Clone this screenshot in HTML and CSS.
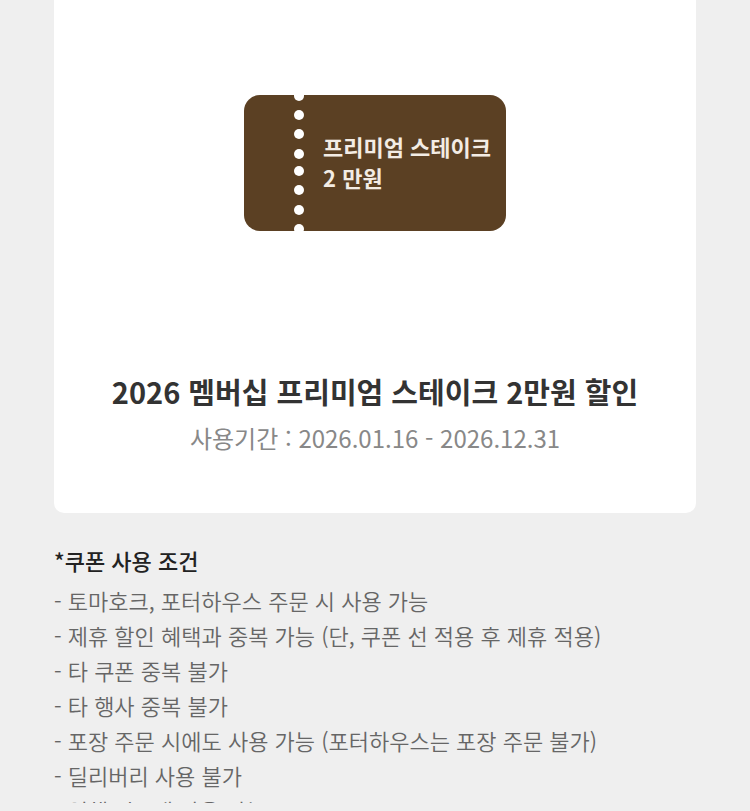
FILE: index.html
```
<!DOCTYPE html>
<html lang="ko">
<head>
  <meta charset="utf-8">
  <meta name="viewport" content="width=device-width, initial-scale=1">
  <title>2026 멤버십 프리미엄 스테이크 2만원 할인</title>
  <link rel="stylesheet" href="styles.css">
</head>
<body>
  <main class="container">
    <section class="coupon-card">
      <div class="ticket">
        <svg class="ticket-line" viewBox="0 0 10 136" aria-hidden="true">
          <circle cx="5" cy="1" r="5"/>
          <circle cx="5" cy="20" r="5"/>
          <circle cx="5" cy="39" r="5"/>
          <circle cx="5" cy="59" r="5"/>
          <circle cx="5" cy="76" r="5"/>
          <circle cx="5" cy="95" r="5"/>
          <circle cx="5" cy="115" r="5"/>
          <circle cx="5" cy="134" r="5"/>
        </svg>
        <p class="ticket-name">프리미엄 스테이크<br>2 만원</p>
      </div>
      <h1 class="coupon-title">2026 멤버십 프리미엄 스테이크 2만원 할인</h1>
      <p class="coupon-period">사용기간 : 2026.01.16 - 2026.12.31</p>
    </section>

    <section class="terms">
      <h2 class="terms-title">*쿠폰 사용 조건</h2>
      <ul class="terms-list">
        <li>- 토마호크, 포터하우스 주문 시 사용 가능</li>
        <li>- 제휴 할인 혜택과 중복 가능 (단, 쿠폰 선 적용 후 제휴 적용)</li>
        <li>- 타 쿠폰 중복 불가</li>
        <li>- 타 행사 중복 불가</li>
        <li>- 포장 주문 시에도 사용 가능 (포터하우스는 포장 주문 불가)</li>
        <li>- 딜리버리 사용 불가</li>
        <li>- 일행 당 1매 사용 가능</li>
      </ul>
    </section>
  </main>
</body>
</html>
```
FILE: styles.css
```
* {
  box-sizing: border-box;
}
body {
  margin: 0;
  background: #efefef;
  color: #333;
  font-family: "Noto Sans CJK KR", sans-serif;
}
h1, h2, p, ul {
  margin: 0;
  padding: 0;
}
/* the terms scroll off under the bottom strip */
.container {
  height: 100vh;
  padding: 0 54px;
  border-bottom: 8px solid #efefef;
  overflow: hidden;
}

.coupon-card {
  padding: 95px 16px 56px;
  border-radius: 0 0 10px 10px;
  background: #fff;
  text-align: center;
}
.ticket {
  width: 262px;
  height: 136px;
  margin: 0 auto 138px;
  padding-left: 50px;
  display: flex;
  align-items: center;
  gap: 19px;
  border-radius: 16px;
  background: #5b4023;
  overflow: hidden;
}
.ticket-line {
  width: 10px;
  height: 136px;
  flex-shrink: 0;
  fill: #fff;
}
.ticket-name {
  padding-bottom: 2px;
  color: #f3ece4;
  font-size: 22px;
  font-weight: 700;
  line-height: 31px;
  text-align: left;
  white-space: nowrap;
}
.coupon-title {
  font-size: 29px;
  font-weight: 700;
  line-height: 44px;
}
.coupon-period {
  margin-top: 6px;
  color: #888;
  font-size: 24px;
  line-height: 38px;
}

.terms {
  padding-top: 30px;
}
.terms-title {
  color: #222;
  font-size: 22px;
  font-weight: 500;
  line-height: 34px;
}
.terms-list {
  margin-top: 6px;
  color: #666;
  font-size: 22px;
  font-weight: 350;
  line-height: 35px;
  list-style: none;
}
```
